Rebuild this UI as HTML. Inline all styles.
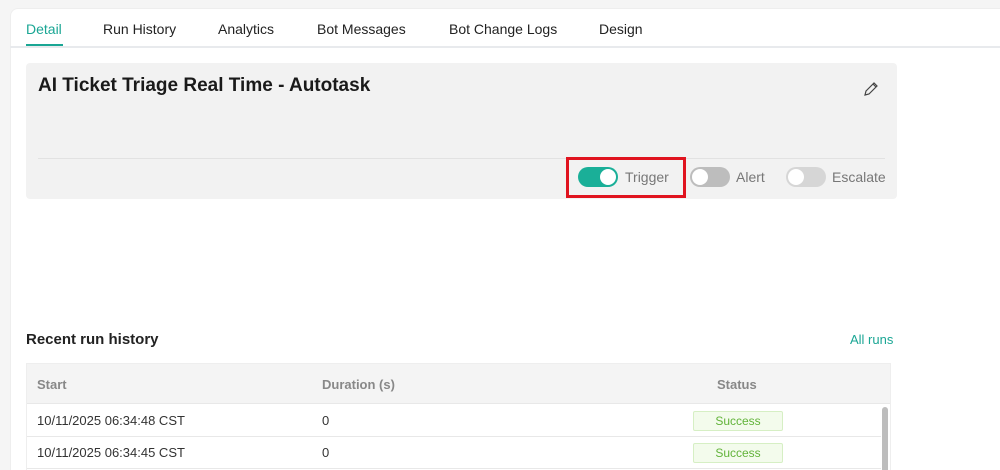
<!DOCTYPE html>
<html><head><style>
*{box-sizing:border-box;margin:0;padding:0}
html,body{width:1000px;height:470px;overflow:hidden}
body{background:#f5f5f5;font-family:"Liberation Sans",sans-serif}
#w{position:relative;width:1000px;height:470px;overflow:hidden}
.card{position:absolute;left:10px;top:8px;width:990px;height:462px;background:#fff;border-top-left-radius:8px;border-left:1px solid #eee;border-top:1px solid #eee}
.a{position:absolute;white-space:nowrap}
.tab{font-size:14px;color:#222;top:21px}
.tgl{position:absolute;width:40px;height:20px;border-radius:10px;top:167px}
.knob{position:absolute;top:2px;width:16px;height:16px;border-radius:50%;background:#fff}
.lbl{font-size:14px;color:#777;top:169px}
.row{position:absolute;left:27px;width:854px;height:32px;border-bottom:1px solid #e8e8e8;font-size:13px;color:#333}
.badge{position:absolute;left:666px;top:6px;width:90px;height:20px;background:#f3fbec;border:1px solid #d6efc4;color:#62b33a;font-size:12px;text-align:center;line-height:18px;border-radius:2px}
</style></head><body><div id="w">
<div class="card"></div>
<div class="a tab" style="left:26px;color:#1aa694">Detail</div>
<div class="a" style="left:26px;top:44px;width:37px;height:3px;background:#1aa694"></div>
<div class="a" style="left:10px;top:46px;width:990px;height:2px;background:#e8eaed"></div>
<div class="a tab" style="left:103px">Run History</div>
<div class="a tab" style="left:218px">Analytics</div>
<div class="a tab" style="left:317px">Bot Messages</div>
<div class="a tab" style="left:449px">Bot Change Logs</div>
<div class="a tab" style="left:599px">Design</div>

<div class="a" style="left:26px;top:63px;width:871px;height:136px;background:#f2f2f2;border-radius:4px"></div>
<div class="a" style="left:38px;top:75px;font-size:19px;font-weight:bold;color:#1a1a1a">AI Ticket Triage Real Time - Autotask</div>
<svg class="a" style="left:862px;top:80px" width="18" height="18" viewBox="0 0 18 18"><path d="M3 15 L4 11 L12 3 L15 6 L7 14 Z M11 4 L14 7" fill="none" stroke="#444" stroke-width="1.2"/></svg>
<div class="a" style="left:38px;top:158px;width:847px;height:1px;background:#e2e2e2"></div>
<div class="a" style="left:566px;top:157px;width:120px;height:41px;border:3px solid #e0141f"></div>
<div class="tgl" style="left:578px;background:#1aaf98"><div class="knob" style="left:22px"></div></div>
<div class="a lbl" style="left:625px">Trigger</div>
<div class="tgl" style="left:690px;background:#bdbdbd"><div class="knob" style="left:2px"></div></div>
<div class="a lbl" style="left:736px">Alert</div>
<div class="tgl" style="left:786px;background:#d6d6d6"><div class="knob" style="left:2px"></div></div>
<div class="a lbl" style="left:832px">Escalate</div>

<div class="a" style="left:26px;top:331px;font-size:15px;font-weight:bold;color:#222">Recent run history</div>
<div class="a" style="left:850px;top:332px;font-size:13px;color:#1aa694">All runs</div>
<div class="a" style="left:26px;top:363px;width:865px;height:107px;border:1px solid #eee;border-bottom:none;background:#fff"></div>
<div class="a" style="left:27px;top:364px;width:863px;height:40px;background:#f4f4f4;border-bottom:1px solid #e8e8e8"></div>
<div class="a" style="left:37px;top:377px;font-size:13px;color:#888;font-weight:bold">Start</div>
<div class="a" style="left:322px;top:377px;font-size:13px;color:#888;font-weight:bold">Duration (s)</div>
<div class="a" style="left:717px;top:377px;font-size:13px;color:#888;font-weight:bold">Status</div>
<div class="row" style="top:405px"><span class="a" style="left:10px;top:8px">10/11/2025 06:34:48 CST</span><span class="a" style="left:295px;top:8px">0</span><div class="badge">Success</div></div>
<div class="row" style="top:437px"><span class="a" style="left:10px;top:8px">10/11/2025 06:34:45 CST</span><span class="a" style="left:295px;top:8px">0</span><div class="badge">Success</div></div>
<div class="a" style="left:882px;top:407px;width:6px;height:63px;background:#bdbdbd;border-radius:3px 3px 0 0"></div>
</div></body></html>
